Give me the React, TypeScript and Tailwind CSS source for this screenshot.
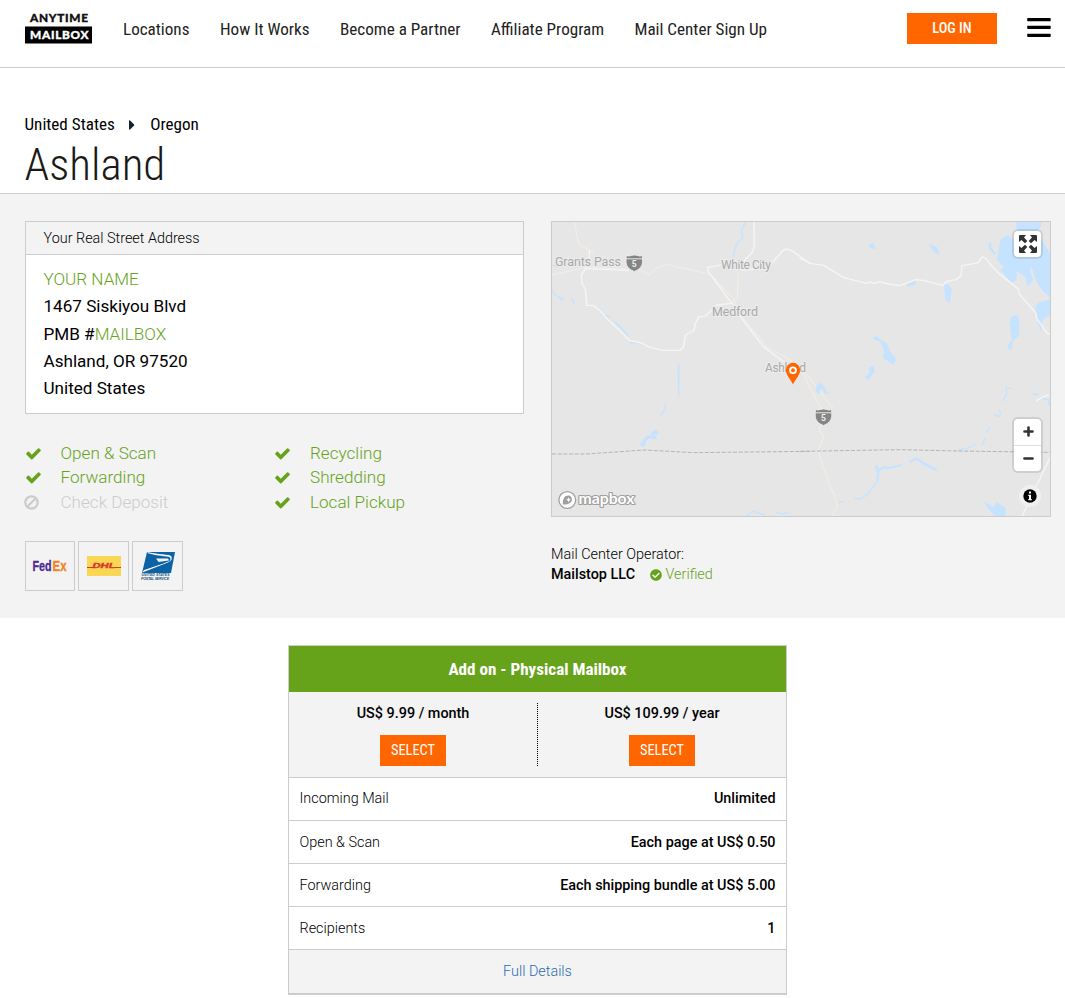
import React from 'react';
import { FaCheckCircle, FaCaretRight } from 'react-icons/fa';

const NAV = [
  { label: 'Locations', cls: 'w-[97px]' },
  { label: 'How It Works', cls: 'w-[120px]' },
  { label: 'Become a Partner', cls: 'w-[151px]' },
  { label: 'Affiliate Program', cls: 'w-[143.500px]' },
  { label: 'Mail Center Sign Up', cls: 'w-[140px]' },
];

const COND = "font-['Roboto_Condensed','Roboto',sans-serif] [font-stretch:75%]";

const ROWS = [
  ['Incoming Mail', 'Unlimited'],
  ['Open & Scan', 'Each page at US$ 0.50'],
  ['Forwarding', 'Each shipping bundle at US$ 5.00'],
  ['Recipients', '1'],
];

function Logo() {
  return (
    <svg width="68" height="34" viewBox="0 -2 68 34" className="block shrink-0 overflow-visible">
      <rect x="0" y="13.5" width="67" height="17" fill="#000" />
      <g fontFamily="Lato, sans-serif" fontWeight="900" fontSize="11.800" strokeWidth=".35">
        <text x="5" y="9.2" textLength="58" fill="#111" stroke="#111">ANYTIME</text>
        <text x="5" y="26.300" textLength="58.500" fill="#fff" stroke="#fff">MAILBOX</text>
      </g>
    </svg>
  );
}

function Check() {
  return (
    <svg width="17" height="17" viewBox="0 0 1792 1792" fill="currentColor" className="-ml-[0.500px]">
      <path d="M1671 566q0 40-28 68l-724 724-136 136q-28 28-68 28t-68-28l-136-136-362-362q-28-28-28-68t28-68l136-136q28-28 68-28t68 28l294 295 656-657q28-28 68-28t68 28l136 136q28 28 28 68z" />
    </svg>
  );
}

function Ban() {
  return (
    <svg width="15" height="15" viewBox="0 0 15 15" fill="none" stroke="currentColor" strokeWidth="2.200" className="-ml-px">
      <circle cx="7.500" cy="7.500" r="6.200" />
      <path d="M3.300 11.700L11.700 3.300" />
    </svg>
  );
}

function Shield({ x, y }: { x: number; y: number }) {
  return (
    <g transform={`translate(${x} ${y})`}>
      <path d="M-8 -7.5 Q-5 -6.300 -3.5 -7.5 Q0 -8.500 3.5 -7.5 Q5 -6.300 8 -7.5 L8.3 -1 Q8 5.500 0 8.5 Q-8 5.500 -8.3 -1Z" fill="#858585" stroke="#f0f0f0" strokeWidth="0.8" />
      <path d="M-8.300 -4.2H8.300" stroke="#e6e6e6" strokeWidth="1" />
      <text x="0" y="4" textAnchor="middle" fontFamily="Roboto, sans-serif" fontWeight="700" fontSize="8.500" fill="#eee">5</text>
    </g>
  );
}

function RegionMap() {
  return (
    <svg width="498" height="294" viewBox="552 222 498 294" className="block">
      <rect x="552" y="222" width="498" height="294" fill="#e6e6e6" />
      <g transform="translate(550 220) scale(.33333)" fill="none" strokeLinecap="round" strokeLinejoin="round">
        <path d="M590 0L575 30L578 55L560 70L548 115M0 135L20 138M5 208L15 225L40 237M65 235L75 253M28 236l12 3" stroke="#c5e3ff" strokeWidth="4" />
        <path d="M150 270L160 285L180 290M195 305L215 325L235 348M240 368L275 368M386 435V525" stroke="#c5e3ff" strokeWidth="4.500" />
        <path d="M74 5L80 45L86 72L130 98M6 165L110 142L240 148L275 152L298 165L320 143L348 133L480 163L552 238L570 285L650 380L720 420L780 475L850 565M565 160L562 235L548 245" stroke="#f3ebe4" strokeWidth="4" />
        <path d="M118 92V115L108 144L94 165L96 190L107 210L110 256L130 256L150 272L175 300L210 332L240 362L275 369L300 382L340 391L388 391L400 382L407 345L433 330L435 312L447 290L465 289L500 255L545 250L475 155L473 142L520 134L575 130L605 100L613 80L612 5M110 146L235 151M575 150L640 146L665 130L700 90Q715 84 730 95L780 130M548 250L575 295L640 380L710 432" stroke="#f5f5f5" strokeWidth="4.200" />
      </g>
      <g transform="translate(800 220) scale(.33333)" fill="#c5e3ff" strokeLinejoin="round">
        <path d="M208 75L220 68L228 87L210 84ZM385 73L410 80L419 105L405 98ZM320 192L345 183L350 190L325 202ZM432 195L445 192L455 210L450 250L436 240ZM218 352L235 348L240 360L260 368L270 395L288 415L282 435L250 415L252 390L240 365L220 357ZM208 443L220 437L224 452L208 452Z" />
        <path d="M567 65L575 70L573 80L590 102L582 104L565 83ZM648 5H725L722 20L710 35L735 75L750 100V232L730 215L712 190L694 142L690 150L700 180L683 200L676 170L650 155V180L635 188L600 150L612 140L590 120L602 58L625 45L640 60L650 30ZM715 145l5 5l-5-8zM750 237V285L728 300L722 335L715 310L705 260L715 248ZM634 290L650 284L658 300L658 345L638 365L635 390L626 390L624 375L635 360L628 310Z" />
        <path d="M0 115L30 130L72 136L130 172L198 190L210 186L225 190L238 185L265 192L300 197L347 179L375 182L428 196L440 184L468 179L483 167L486 137L535 128L544 112H554L590 155L655 207L658 222L708 280L710 295L740 338L750 343" fill="none" stroke="#f5f5f5" strokeWidth="4.200" />
      </g>
      <g transform="translate(550 365) scale(.33333)" fill="none" strokeLinecap="round">
        <path d="M345 118L346 132L333 150M590 453L610 438L625 444L645 450M680 443L700 447L713 443M386 0V40" stroke="#c5e3ff" strokeWidth="4" />
        <path d="M278 245L284 225L295 215L320 218M305 210L315 200L325 206M272 236L285 240" stroke="#c5e3ff" strokeWidth="10" strokeLinecap="butt" />
        <path d="M6 267H110L285 255L430 263L780 259" stroke="#b4b4b4" strokeWidth="3" strokeDasharray="12 5" strokeLinecap="butt" />
      </g>
      <g transform="translate(800 365) scale(.33333)" fill="none" strokeLinecap="round" strokeLinejoin="round">
        <path d="M50 60L62 53L70 60L78 78L91 86L74 84L64 70L55 90L48 78ZM208 8L220 2L224 18L210 40L203 46L196 36L208 24Z" fill="#c5e3ff" />
        <path d="M635 70L618 70L620 88L608 107M700 87L715 88M725 100L745 105L748 120M595 135L602 143L597 155L585 148M568 190L562 200M555 220L547 240M525 240L500 250L475 255M165 400L180 402L200 390L225 358L235 345M115 413L128 410" stroke="#c5e3ff" strokeWidth="4" />
        <path d="M228 303L235 325L232 345M235 318L250 307L275 308L302 300M332 290L350 280L370 295L408 314" stroke="#c5e3ff" strokeWidth="7" />
        <path d="M552 408L580 425L590 411L617 428V453H585L565 432Z" fill="#c5e3ff" />
        <path d="M8 25L70 145L58 198L72 215L55 255L70 310L112 415L110 430L98 452" stroke="#f3ebe4" strokeWidth="4" />
        <path d="M710 107L725 98L745 90M750 280L732 315L718 345L667 452" stroke="#f5f5f5" strokeWidth="4.200" />
        <path d="M0 259L300 254L475 258L750 262" stroke="#b4b4b4" strokeWidth="3" strokeDasharray="12 5" strokeLinecap="butt" />
      </g>
      <g fontFamily="Roboto, sans-serif" fontSize="12" fill="#a8a8a8" stroke="#ececec" strokeWidth="2" paintOrder="stroke">
        <text x="555" y="266" textLength="66" fontSize="12.5">Grants Pass</text>
        <text x="721" y="269" textLength="50">White City</text>
        <text x="712" y="315.500" textLength="46" fontSize="12.5">Medford</text>
        <text x="765" y="372" textLength="41">Ashland</text>
      </g>
      <Shield x={634.3} y={263} />
      <Shield x={823.5} y={417} />
      <path d="M793 384.500C791 380 785.800 375 785.800 370A7.200 7.200 0 0 1 800.200 370C800.200 375 795 380 793 384.500Z" fill="#ff6600" />
      <circle cx="793" cy="370.300" r="2.900" fill="none" stroke="#fff" strokeWidth="1.900" />
      <circle cx="567.300" cy="500" r="8.400" fill="#fff" stroke="#a0a0a0" strokeWidth="1.300" />
      <path d="M562.800 504.500C562.500 499 564.500 495.600 568.200 495.600A4 4 0 0 1 571.900 499.600C571.900 503.200 567.500 505 562.800 504.500Z" fill="#a0a0a0" />
      <path d="M568.500 497.200L569.300 499L571 499.700L569.300 500.500L568.500 502.200L567.800 500.500L566 499.700L567.800 499Z" fill="#fff" />
      <text x="578.500" y="504" textLength="56" lengthAdjust="spacingAndGlyphs" fontFamily="Lato, sans-serif" fontWeight="700" fontSize="14.500" fill="#fff" stroke="#a0a0a0" strokeWidth="2.200" paintOrder="stroke" strokeLinejoin="round">mapbox</text>
    </svg>
  );
}

function MapPanel() {
  return (
    <div className="relative h-[296px] w-[500px] border border-[#ccc]">
      <RegionMap />
      <div className="absolute right-[9px] top-[9px] flex h-[26px] w-[27px] items-center justify-center rounded bg-white pl-px shadow-[0_0_0_2px_rgba(0,0,0,0.1)]">
        <svg width="18" height="18" viewBox="0 0 18 18" fill="#333">
          <path d="M1 0H7L5 2.400L8.300 6L6 8.300L2.400 5L0 7V1Q0 0 1 0Z" />
          <path d="M17 0H11L13 2.400L9.700 6L12 8.300L15.600 5L18 7V1Q18 0 17 0Z" />
          <path d="M1 18H7L5 15.600L8.300 12L6 9.700L2.400 13L0 11V17Q0 18 1 18Z" />
          <path d="M17 18H11L13 15.600L9.700 12L12 9.700L15.600 13L18 11V17Q18 18 17 18Z" />
        </svg>
      </div>
      <div className="absolute right-[9px] top-[197px] flex h-[52px] w-[27px] flex-col rounded bg-white text-[#333] shadow-[0_0_0_2px_rgba(0,0,0,0.1)]">
        <div className="flex flex-1 items-center justify-center border-b border-[#ddd] pl-px">
          <svg width="11" height="11" viewBox="0 0 11 11" stroke="currentColor" strokeWidth="2.600" strokeLinecap="round"><path d="M5.500 1.500V9.500M1.500 5.500H9.500" /></svg>
        </div>
        <div className="flex flex-1 items-center justify-center pl-px">
          <svg width="11" height="11" viewBox="0 0 11 11" stroke="currentColor" strokeWidth="2.600" strokeLinecap="round"><path d="M1.500 5.500H9.500" /></svg>
        </div>
      </div>
      <div className="absolute bottom-[9px] right-[9px] flex size-[22px] items-center justify-center rounded-full bg-[#f0f0f0]">
        <svg width="14" height="14" viewBox="0 0 14 14">
          <circle cx="7" cy="7" r="6.700" />
          <path d="M6 2.500h2v2H6zM5.200 5.700H8v4.300h.8v1.300H5.200V10H6V7h-.8z" fill="#fff" />
        </svg>
      </div>
    </div>
  );
}

function Feature({ label, off }: { label: string; off?: boolean }) {
  return (
    <div className={off ? 'flex h-[24.500px] items-center text-[#ccc]' : 'flex h-[24.500px] items-center text-[#66a31b]'}>
      <span className="flex w-[35.500px] shrink-0">{off ? <Ban /> : <Check />}</span>
      <span className="-mt-px text-[17.100px] font-light leading-6">{label}</span>
    </div>
  );
}

function Carriers() {
  const box = 'flex h-[50px] items-center justify-center border border-[#ccc]';
  return (
    <div className="mt-[26px] flex gap-[3px]">
      <div className={box + ' w-[50px]'}>
        <svg width="36" height="20" viewBox="0 -3 36 20" className="overflow-visible" fontFamily="Liberation Sans, sans-serif" fontWeight="700" fontSize="14.500" strokeWidth=".3">
          <text x="0.500" y="12.200" textLength="19" lengthAdjust="spacingAndGlyphs" fill="#4d2a91" stroke="#4d2a91">Fed</text>
          <text x="20.500" y="12.200" textLength="14" lengthAdjust="spacingAndGlyphs" fill="#f58220" stroke="#f58220">Ex</text>
        </svg>
      </div>
      <div className={box + ' w-[51px]'}>
        <svg width="34" height="20" viewBox="0 0 34 20">
          <rect width="34" height="20" fill="#f9d653" />
          <path d="M0 11.500H6M28 11.500H34" stroke="#d8392c" strokeWidth="1" />
          <text x="5.500" y="12.300" textLength="23" lengthAdjust="spacingAndGlyphs" fontFamily="Liberation Sans, sans-serif" fontWeight="700" fontStyle="italic" fontSize="7" fill="#d8392c" stroke="#d8392c" strokeWidth=".4">DHL</text>
        </svg>
      </div>
      <div className={box + ' w-[51px]'}>
        <svg width="36" height="28" viewBox="0 0 36 28" className="overflow-visible">
          <path d="M7 0H35L31 21H2Z" fill="#0b62a5" />
          <path d="M7.500 1C14 3 18 3.500 27 4.500C30 5 31 6 30 9L4 18L2.500 20.500L28 10.500C32 9 32.500 6 31 4L29 3C20 2 14 1.500 7.500 0Z" fill="#f3f3f3" />
          <path d="M7 6L17 6.500L18 10L26 10.500L4.500 17.500Z" fill="#0b62a5" />
          <path d="M16 6.500H28L29 8.500L18.500 10Z" fill="#f3f3f3" />
          <g fontFamily="Liberation Sans, sans-serif" fontWeight="700" fontStyle="italic" fontSize="3.500" fill="#20537d">
            <text x="1.500" y="24.200" textLength="28">UNITED STATES</text>
            <text x="1" y="28" textLength="28">POSTAL SERVICE</text>
          </g>
        </svg>
      </div>
    </div>
  );
}

function Price({ text }: { text: string }) {
  return (
    <div className="flex flex-1 flex-col items-center">
      <div className="h-8 text-[14.400px] font-medium leading-[21px]">{text}</div>
      <button className={COND + ' h-[31px] w-[66px] bg-[#ff6600] text-[14.400px] leading-[31px] text-white'}>SELECT</button>
    </div>
  );
}

export default function App() {
  return (
    <div className="h-[998px] w-[1065px] overflow-hidden bg-white font-['Roboto',sans-serif] text-black">
      <header className="flex h-[68px] items-start border-b border-[#ccc] pl-[25px]">
        <div className="mt-[11px] w-[98px]"><Logo /></div>
        <nav className={COND + ' mt-[17px] flex text-[17.100px] leading-6 text-[#222]'}>
          {NAV.map((n) => (
            <a key={n.label} className={n.cls + ' whitespace-nowrap'}>{n.label}</a>
          ))}
        </nav>
        <button className={COND + ' ml-auto mt-[13px] h-[31px] w-[90px] bg-[#ff6600] text-[14.400px] font-medium leading-[31px] text-white'}>LOG IN</button>
        <svg width="24" height="20" viewBox="0 0 24 20" className="ml-[30px] mr-[14px] mt-[18px] block">
          <rect x="0.200" y="0" width="23.500" height="3.200" rx=".7" />
          <rect x="0.200" y="7.800" width="23.500" height="3.200" rx=".7" />
          <rect x="0.200" y="15.800" width="23.500" height="3.200" rx=".7" />
        </svg>
      </header>

      <section className={COND + ' h-[126px] border-b border-[#ccc] pl-[24.500px] pt-[45px]'}>
        <div className="flex h-6 items-center text-[17.100px]">
          <span>United States</span>
          <FaCaretRight size={16} className="ml-[9.500px] mr-[10px] text-[#12222e]" />
          <span>Oregon</span>
        </div>
        <h1 className="mt-px text-[45px] font-light leading-[54px] text-[#1a1a1a]">Ashland</h1>
      </section>

      <section className="flex h-[424px] gap-[27px] bg-[#f3f3f3] pl-[25px] pt-[27px]">
        <div className="w-[499px]">
          <div className="h-[193px] border border-[#ccc] bg-white">
            <div className="h-[33px] border-b border-[#ccc] bg-[#f3f3f3] pl-[17.500px] pt-px text-[14.400px] font-light leading-[32px]">Your Real Street Address</div>
            <div className="pl-[17.500px] pt-[11px] text-[17.100px] leading-[27.300px]">
              <div className="font-light text-[#66a31b]">YOUR NAME</div>
              <div>1467 Siskiyou Blvd</div>
              <div>PMB #<span className="font-light text-[#66a31b]">MAILBOX</span></div>
              <div>Ashland, OR 97520</div>
              <div>United States</div>
            </div>
          </div>
          <div className="mt-[27px] grid grid-cols-2">
            <Feature label="Open & Scan" />
            <Feature label="Recycling" />
            <Feature label="Forwarding" />
            <Feature label="Shredding" />
            <Feature label="Check Deposit" off />
            <Feature label="Local Pickup" />
          </div>
          <Carriers />
        </div>
        <div>
          <MapPanel />
          <div className="mt-[28px] text-[14.400px] leading-5">
            <div className="font-light">Mail Center Operator:</div>
            <div className="flex items-center">
              <span className="font-medium">Mailstop LLC</span>
              <FaCheckCircle size={12} className="-mt-px ml-[15px] mr-[3.500px] text-[#66a31b]" />
              <span className="font-light text-[#66a31b]">Verified</span>
            </div>
          </div>
        </div>
      </section>

      <section className="ml-[288px] mt-[27px] w-[499px] border border-b-2 border-[#ccc] text-[14.400px]">
        <h2 className={COND + ' h-[46px] bg-[#66a31b] text-center text-[17.100px] font-bold leading-[47px] text-white'}>Add on - Physical Mailbox</h2>
        <div className="flex h-[86px] border-b border-[#ccc] bg-[#f3f3f3] pt-[11px]">
          <Price text="US$ 9.99 / month" />
          <div className="h-[63px] border-l border-dotted border-black" />
          <Price text="US$ 109.99 / year" />
        </div>
        {ROWS.map(([k, v]) => (
          <div key={k} className="flex h-[43px] items-center justify-between border-b border-[#ccc] px-[10.500px] pt-[2px] leading-5 first-of-type:pt-0 [&:nth-child(3)]:pt-0">
            <span className="font-light">{k}</span>
            <span className="font-medium">{v}</span>
          </div>
        ))}
        <div className="h-[43px] bg-[#f3f3f3] text-center font-light leading-[43px] text-[#2a6db0]">Full Details</div>
      </section>
    </div>
  );
}
